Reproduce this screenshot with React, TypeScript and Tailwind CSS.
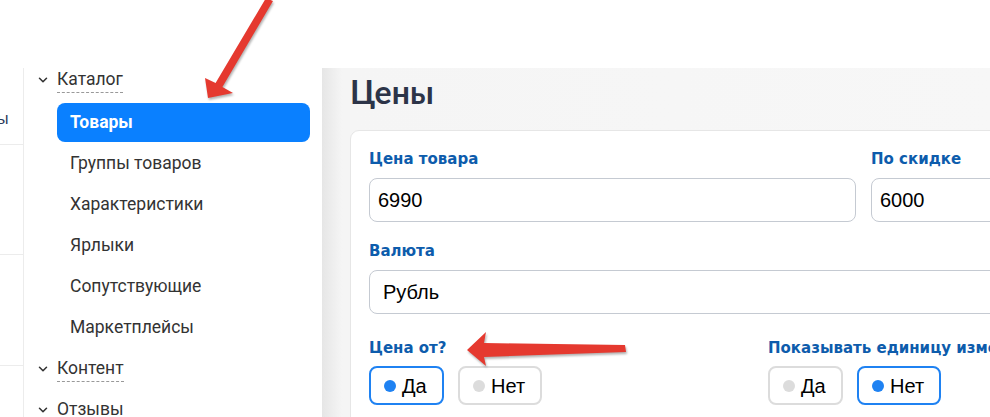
import * as React from 'react';
import { ChevronDown } from 'lucide-react';

const SUB_ITEMS = ['Товары', 'Группы товаров', 'Характеристики', 'Ярлыки', 'Сопутствующие', 'Маркетплейсы'];

const GroupHeader: React.FC<{ title: string; className?: string }> = ({ title, className = '' }) => (
    <div className={`flex items-center h-[24px] ${className}`}>
        <ChevronDown className="w-[14px] h-[14px] ml-[12px] mr-[7px] text-[#333]" strokeWidth={2.6} />
        <span className="leading-[24px] text-[17.5px] text-[#333] border-b border-dashed border-[#999] pb-[1px]">{title}</span>
    </div>
);

const Toggle: React.FC<{ label: string; active?: boolean; width: string }> = ({ label, active, width }) => (
    <div
        className={`flex items-center h-[39px] ${width} pl-[13px] rounded-[8px] border-2 ${active ? 'border-[#1f82f2]' : 'border-[#dcdcdc]'}`}
    >
        <span className={`w-[12px] h-[12px] rounded-full ${active ? 'bg-[#1f82f2]' : 'bg-[#dcdcdc]'}`} />
        <span className="ml-[6px] text-[20px] text-black">{label}</span>
    </div>
);

const Label: React.FC<{ children: React.ReactNode }> = ({ children }) => (
    <div className="text-[15px] leading-[20px] font-bold text-[#0d5cac] font-['DejaVu_Sans',Verdana,sans-serif] whitespace-nowrap">{children}</div>
);

export default function App() {
    return (
        <div className="relative w-[990px] h-[417px] overflow-hidden bg-white font-['Liberation_Sans',Arial,sans-serif]">
            <div className="h-[68px]" />
            <div className="flex h-[349px]">
                {/* narrow left column */}
                <div className="w-[24px] shrink-0 border-r border-[#ececec] overflow-hidden">
                    <div className="h-[77px] border-b border-[#ececec] pt-[41px]">
                        <div className="-ml-[3px] text-[16px] leading-[20px] text-[#2b3a5c]">ы</div>
                    </div>
                    <div className="h-[110px] border-b border-[#ececec]" />
                    <div className="h-[111px] border-b border-[#ececec]" />
                </div>

                {/* sidebar menu */}
                <div className="w-[298px] shrink-0 font-['Roboto',sans-serif]">
                    <GroupHeader title="Каталог" />
                    <div className="mt-[11px] flex flex-col pl-[33px] pr-[12px]">
                        {SUB_ITEMS.map((item, i) => (
                            <div
                                key={item}
                                className={`h-[39px] mb-[2px] flex items-center pl-[13px] rounded-[8px] text-[17.5px] ${i === 0 ? 'bg-[#0a80ff] text-white font-bold' : 'text-[#333]'}`}
                            >
                                {item}
                            </div>
                        ))}
                    </div>
                    <GroupHeader title="Контент" className="mt-[8px]" />
                    <GroupHeader title="Отзывы" className="mt-[17px]" />
                </div>

                {/* main area */}
                <div className="flex-1 bg-[#f7f7f7] bg-gradient-to-r from-[#e6e6e6] via-[#f5f5f5] via-[3%] to-[#f7f7f7] pl-[28px] min-w-0">
                    <h1 className="pt-[4px] h-[62px] text-[32px] leading-[40px] font-bold text-[#2c3448] font-['Lato',sans-serif]">Цены</h1>
                    <div className="w-[830px] bg-white rounded-tl-[9px] border border-[#e6e6e6] pl-[18px] pt-[18px] pb-[20px]">
                        <div className="flex gap-[15px]">
                            <div className="w-[487px]">
                                <Label>Цена товара</Label>
                                <div className="mt-[9px] h-[44px] border border-[#c5cad2] rounded-[8px] flex items-center pl-[8px] text-[20px] text-black">6990</div>
                            </div>
                            <div className="flex-1">
                                <Label>По скидке</Label>
                                <div className="mt-[9px] h-[44px] border border-[#c5cad2] rounded-[8px] flex items-center pl-[8px] text-[20px] text-black">6000</div>
                            </div>
                        </div>
                        <div className="mt-[19px]">
                            <Label>Валюта</Label>
                            <div className="mt-[9px] h-[44px] border border-[#c5cad2] rounded-[8px] flex items-center pl-[13px] text-[20px] text-black">Рубль</div>
                        </div>
                        <div className="mt-[24px] flex">
                            <div className="w-[399px]">
                                <Label>Цена от?</Label>
                                <div className="mt-[8px] flex gap-[14px]">
                                    <Toggle label="Да" active width="w-[75px]" />
                                    <Toggle label="Нет" width="w-[84px]" />
                                </div>
                            </div>
                            <div className="flex-1">
                                <Label>Показывать единицу измерения</Label>
                                <div className="mt-[8px] flex gap-[14px]">
                                    <Toggle label="Да" width="w-[75px]" />
                                    <Toggle label="Нет" active width="w-[84px]" />
                                </div>
                            </div>
                        </div>
                    </div>
                </div>
            </div>

            {/* annotation arrows */}
            <svg className="absolute inset-0 pointer-events-none drop-shadow-[1px_2px_1px_rgba(0,0,0,0.3)]" width="990" height="417" viewBox="0 0 990 417">
                <polygon
                    points="208,98 205,78 215.6,82.9 266,-2 273,1 222.4,87.1 233,93"
                    fill="#e5392f"
                />
                <polygon
                    points="467,350 486,332 484,343 625,345 626,352 484,357 486,366"
                    fill="#e5392f"
                />
            </svg>
        </div>
    );
}
